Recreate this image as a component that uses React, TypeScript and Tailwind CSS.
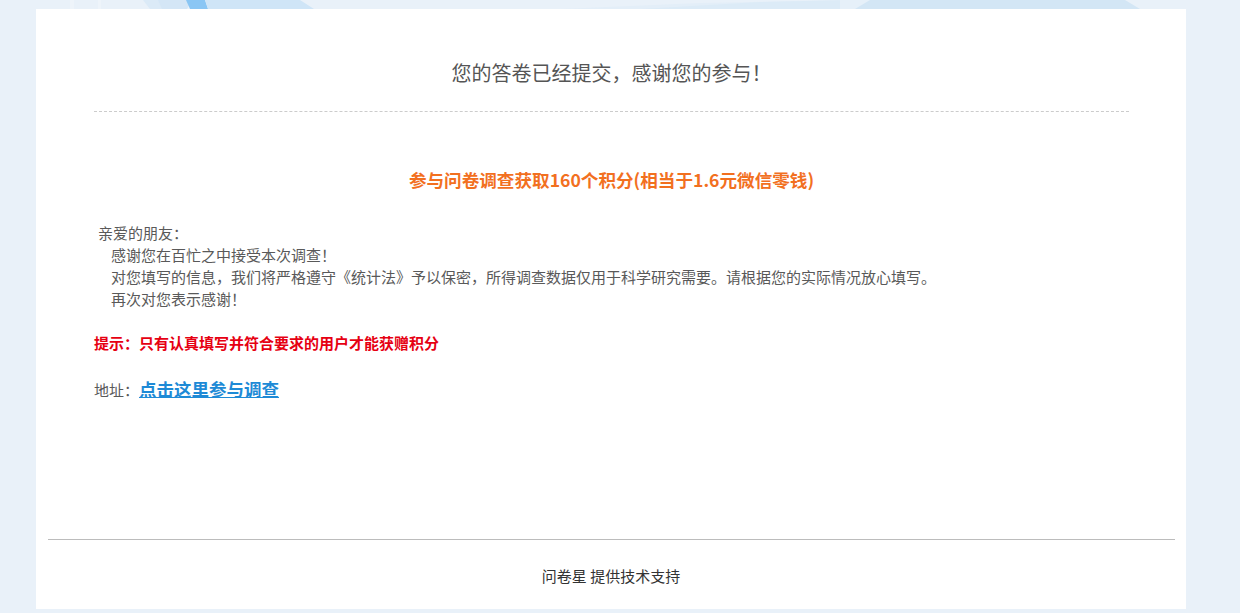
import React from "react";

const font = { fontFamily: '"Noto Sans CJK SC", "Noto Sans", sans-serif' };

function TopDecor() {
  return (
    <svg width="1240" height="9" viewBox="0 0 1240 9" className="block">
      <rect x="0" y="0" width="1240" height="9" fill="#e9f1f9" />
      <rect x="70" y="0" width="4" height="9" fill="#eef4fa" />
      <rect x="98" y="0" width="3" height="9" fill="#eef4fa" />
      <polygon points="143,0 190,0 186,9 150,9" fill="#dbeaf7" />
      <polygon points="158,0 192,0 187,9 162,9" fill="#d4e6f6" />
      <polygon points="186,0 205,0 208,9 190,9" fill="#8ac6f4" />
      <polygon points="205,0 300,0 314,9 208,9" fill="#cfe5f7" />
      <polygon points="560,9 700,3 840,0 840,9" fill="#e3eef8" />
      <polygon points="640,9 760,2 850,0 850,9" fill="#dcebf7" />
      <polygon points="840,0 1125,0 1140,9 855,9" fill="#d3e6f5" />
      <polygon points="840,0 870,0 855,9 840,9" fill="#e6f0f9" />
    </svg>
  );
}

export default function App() {
  return (
    <div className="w-[1240px] h-[613px] bg-[#e9f1f9] overflow-hidden" style={font}>
      <TopDecor />
      <div className="ml-[36px] w-[1150px] h-[600px] bg-white flex flex-col">
        <div className="pt-[49px] px-[58px] pr-[57px]">
          <div className="text-center text-[20px] leading-[30px] text-[#555]">
            您的答卷已经提交，感谢您的参与！
          </div>
          <div className="mt-[23px] border-t border-dashed border-[#cccccc]" />
          <div className="mt-[55px] text-center text-[17.6px] leading-[26px] font-bold text-[#f2701f]">
            参与问卷调查获取160个积分(相当于1.6元微信零钱)
          </div>
          <div className="mt-[29px] text-[15px] leading-[22px] text-[#595959]">
            <div className="pl-[4px]">亲爱的朋友：</div>
            <div className="pl-[17px]">感谢您在百忙之中接受本次调查！</div>
            <div className="pl-[17px]">
              对您填写的信息，我们将严格遵守《统计法》予以保密，所得调查数据仅用于科学研究需要。请根据您的实际情况放心填写。
            </div>
            <div className="pl-[17px]">再次对您表示感谢！</div>
          </div>
          <div className="mt-[22px] text-[15px] leading-[22px] font-bold text-[#e60012]">
            提示：只有认真填写并符合要求的用户才能获赠积分
          </div>
          <div className="mt-[22px] text-[15px] leading-[26px] text-[#595959]">
            地址：
            <a href="#" className="text-[17.5px] font-bold text-[#1e8ad6] underline">
              点击这里参与调查
            </a>
          </div>
        </div>
        <div className="mt-auto pb-[22px]">
          <div className="mx-[12px] mr-[11px] h-px bg-[#bcbcbc]" />
          <div className="mt-[25px] text-center text-[15px] leading-[22px] text-[#333]">
            问卷星 提供技术支持
          </div>
        </div>
      </div>
    </div>
  );
}
